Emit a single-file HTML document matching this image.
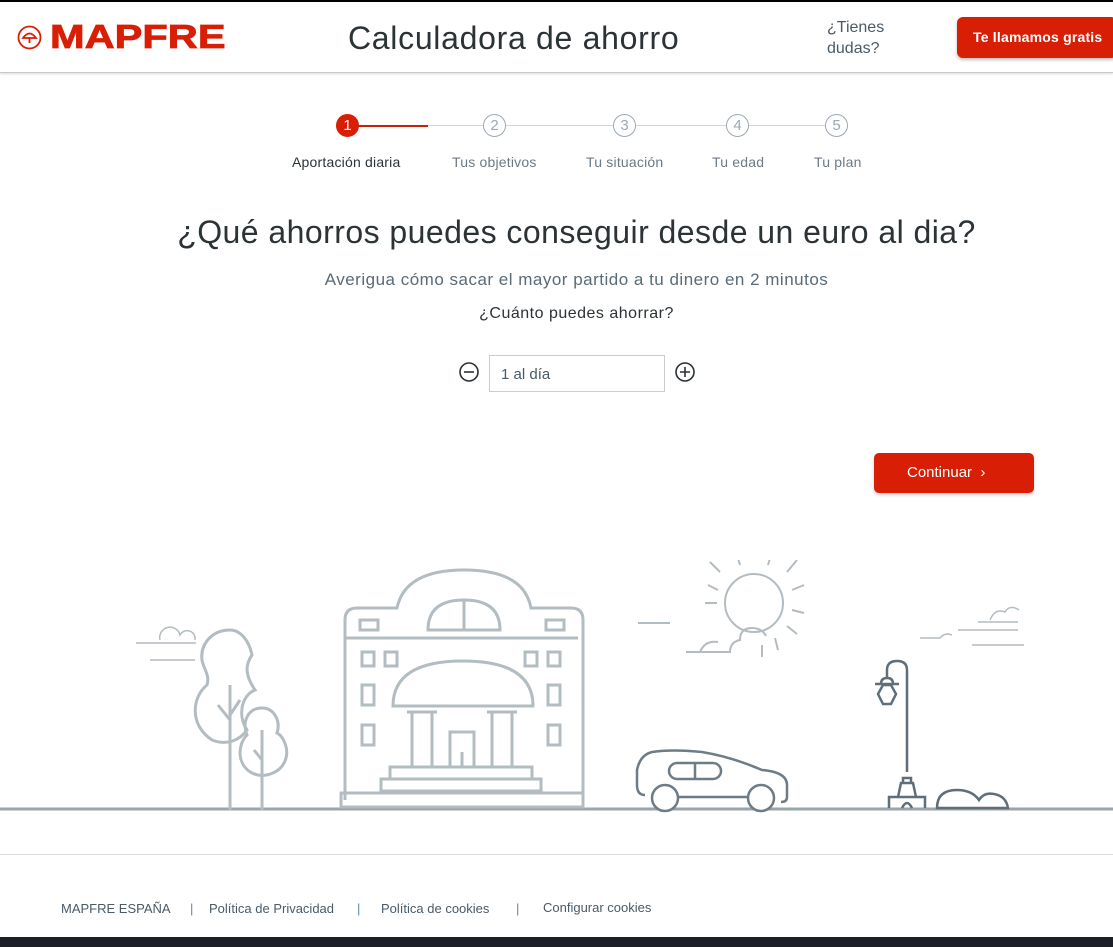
<!DOCTYPE html>
<html><head><meta charset="utf-8">
<style>
*{margin:0;padding:0;box-sizing:border-box}
body{width:1113px;height:947px;overflow:hidden;background:#fff;font-family:"Liberation Sans",sans-serif;position:relative;color:#2b3336}
.top{position:absolute;left:0;top:0;width:1113px;height:2px;background:#000}
.hdr{position:absolute;left:0;top:2px;width:1113px;height:71px;border-bottom:1px solid #c8c8c8;box-shadow:0 1px 2px rgba(0,0,0,.15)}
.logo{position:absolute;left:17px;top:20px;display:flex;align-items:center}
.logo span{font-weight:900;font-size:33px;color:#d81e05;margin-left:8px;line-height:30px;display:inline-block;transform:scaleX(1.26);transform-origin:left center;-webkit-text-stroke:0.8px #d81e05}
.title{position:absolute;left:348px;top:18px;font-size:32px;letter-spacing:0.7px;color:#2b3336}
.dudas{position:absolute;left:827px;top:15px;font-size:16px;color:#4a5a66;line-height:21px}
.call{position:absolute;left:957px;top:15px;width:160px;height:41px;background:#d81e05;border-radius:6px;color:#fff;font-weight:bold;font-size:14px;line-height:41px;padding-left:16px;letter-spacing:0.2px;box-shadow:0 2px 3px rgba(0,0,0,.25)}
.line{position:absolute;top:125px;height:1px;background:#d0d6dc}
.c{position:absolute;top:114px;width:23px;height:23px;border-radius:50%;border:1px solid #9aa8b6;color:#9aa8b6;font-size:15px;text-align:center;line-height:21px;background:#fff}
.lbl{position:absolute;top:154px;font-size:14px;letter-spacing:0.2px;color:#6b7a86}
h1{position:absolute;left:0;width:1153px;top:214px;text-align:center;font-weight:normal;font-size:32px;letter-spacing:0.45px;color:#2b3336}
.sub{position:absolute;left:0;width:1153px;top:270px;text-align:center;font-size:17px;letter-spacing:0.5px;color:#5a6a76}
.q{position:absolute;left:0;width:1153px;top:305px;text-align:center;font-size:16px;letter-spacing:0.5px;color:#2b3336}
.inp{position:absolute;left:489px;top:355px;width:176px;height:37px;border:1px solid #c8cdd2;font-size:15px;padding-left:11px;line-height:37px;color:#4a5a66}
.btn{position:absolute;left:874px;top:453px;width:160px;height:40px;background:#d81e05;border-radius:5px;color:#fff;font-size:15px;line-height:40px;padding-left:33px;box-shadow:0 2px 3px rgba(0,0,0,.2)}
.foot{position:absolute;left:0;top:854px;width:1113px;height:1px;background:#ddd}
.fl{position:absolute;top:901px;font-size:13px;color:#4a5a66}
.bar{position:absolute;left:0;top:937px;width:1113px;height:10px;background:#1c1f26}
</style></head><body>
<div class="top"></div>
<div class="hdr">
 <div class="logo"><svg width="25" height="25" viewBox="0 0 25 25"><circle cx="12.5" cy="12.5" r="11" fill="none" stroke="#d81e05" stroke-width="1.8"/><path d="M6 13 Q12.5 4 19 13 Z M12.5 13 V18" fill="none" stroke="#d81e05" stroke-width="1.8"/></svg><span>MAPFRE</span></div>
 <div class="title">Calculadora de ahorro</div>
 <div class="dudas">¿Tienes<br>dudas?</div>
 <div class="call">Te llamamos gratis</div>
</div>
<div class="line" style="left:358px;width:70px;height:2px;top:125px;background:#c8200a"></div>
<div class="line" style="left:428px;width:420px"></div>
<div class="c" style="left:336px;background:#d81e05;border-color:#d81e05;color:#fff">1</div>
<div class="c" style="left:483px">2</div>
<div class="c" style="left:613px">3</div>
<div class="c" style="left:726px">4</div>
<div class="c" style="left:825px">5</div>
<div class="lbl" style="left:292px;color:#2b3336">Aportación diaria</div>
<div class="lbl" style="left:452px">Tus objetivos</div>
<div class="lbl" style="left:586px">Tu situación</div>
<div class="lbl" style="left:712px">Tu edad</div>
<div class="lbl" style="left:814px">Tu plan</div>
<h1>¿Qué ahorros puedes conseguir desde un euro al dia?</h1>
<div class="sub">Averigua cómo sacar el mayor partido a tu dinero en 2 minutos</div>
<div class="q">¿Cuánto puedes ahorrar?</div>
<svg style="position:absolute;left:458px;top:361px" width="240" height="24"><circle cx="11" cy="11" r="9" fill="none" stroke="#2b3336" stroke-width="1.6"/><path d="M6 11h10" stroke="#2b3336" stroke-width="1.6"/><circle cx="227" cy="11" r="9" fill="none" stroke="#2b3336" stroke-width="1.6"/><path d="M222 11h10M227 6v10" stroke="#2b3336" stroke-width="1.6"/></svg>
<div class="inp">1 al día</div>
<div class="btn">Continuar &nbsp;›</div>
<svg style="position:absolute;left:0;top:560px" width="1113" height="280" viewBox="0 560 1113 280" fill="none" stroke="#b3bcc1" stroke-width="3">
 <path d="M0 809H1113" stroke="#9aa4aa"/>
 <path d="M136 643h60M150 660h45M160 640a10 10 0 0 1 20 -5a8 8 0 0 1 15 5" stroke-width="1.5"/>
 <path d="M230 630c-18 0-30 14-28 30c2 10 8 15 5 25c-15 12-18 40 5 55c15 6 28 0 35-10c-10-15-5-35 8-40c-10-15-10-25-3-35c-3-15-12-25-22-25z"/>
 <path d="M230 685v125M230 720l-12-15M230 715l10-15"/>
 <path d="M262 708c-15 0-20 15-15 27c-10 10-10 30 5 38c12 6 28 0 33-12c5-12-2-25-8-28c4-12-3-25-15-25z"/>
 <path d="M262 730v80M262 760l-8-10"/>
 <path d="M345 800V620q0-12 12-12h40q8-38 67-38q60 0 67 38h40q12 0 12 12v180M345 638h233"/>
 <path d="M428 630q0-30 36-30q36 0 36 30zM464 600v30"/>
 <rect x="360" y="620" width="18" height="10"/><rect x="546" y="620" width="18" height="10"/>
 <rect x="362" y="652" width="12" height="14"/><rect x="385" y="652" width="12" height="14"/><rect x="525" y="652" width="12" height="14"/><rect x="548" y="652" width="12" height="14"/>
 <rect x="362" y="685" width="12" height="20"/><rect x="362" y="725" width="12" height="20"/><rect x="548" y="685" width="12" height="20"/><rect x="548" y="725" width="12" height="20"/>
 <path d="M393 706q0-45 70-45q70 0 70 45z"/>
 <path d="M407 712h30M412 712v55M432 712v55M487 712h30M492 712v55M512 712v55"/>
 <path d="M450 767v-35h24v35M462 767v-15"/>
 <path d="M390 767h142v12H390zM381 779h160v12H381zM341 793h242v14H341z"/>
 <g stroke-width="2"><circle cx="754" cy="603" r="29"/>
 <path d="M720 572l-10-10M740 565l-3-10M754 560v-12M768 565l3-10M787 572l10-12M792 590l12-5M792 610l12 3M787 626l10 8M775 638l3 12M762 645v12M708 585l10 5M705 603h12M638 623h32M686 652h44q0-10 10-12q0-12 12-12q10 0 14 8"/></g>
 <path d="M700 652q5-12 18-10" stroke-width="2"/>
 <g stroke-width="1.5"><path d="M920 638h20q5-6 12-3M958 630h60M978 622h40M972 645h52M990 620q5-12 15-8q5-8 14-2"/></g>
 <g stroke="#6e7c86" stroke-width="2.5">
 <path d="M645 795q-8 0-8-10v-15q3-15 15-18q20-3 50 0q30 5 60 18q25 2 25 15v12q0 5-6 5M673 797h75"/>
 <rect x="669" y="763" width="52" height="16" rx="8"/><path d="M695 763v16"/>
 <circle cx="665" cy="798" r="13" fill="#fff"/><circle cx="761" cy="798" r="13" fill="#fff"/></g>
 <g stroke="#5f6e78" stroke-width="2.5">
 <path d="M907 772V670q0-9-10-9q-10 0-10 9v8"/>
 <path d="M881 684q0-6 6-6q6 0 6 6M875 684h24M878 694l5-9h8l5 9l-5 10h-8z"/>
 <path d="M903 783v-5h8v5M898 797l3-14h12l3 14M889 808v-11h36v11M902 808q5-10 10 0"/></g>
 <path d="M937 808q0-18 20-18q15 0 22 10q5-8 15-6q12 2 14 14z" stroke="#5f6e78" stroke-width="2.5"/>
</svg>
<div class="foot"></div>
<div class="fl" style="left:61px">MAPFRE ESPAÑA</div>
<div class="fl" style="left:190px;color:#5a8ab0">|</div>
<div class="fl" style="left:209px">Política de Privacidad</div>
<div class="fl" style="left:357px;color:#5a8ab0">|</div>
<div class="fl" style="left:381px">Política de cookies</div>
<div class="fl" style="left:516px;color:#5a8ab0">|</div>
<div class="fl" style="left:543px;top:900px">Configurar cookies</div>
<div class="bar"></div>
</body></html>
